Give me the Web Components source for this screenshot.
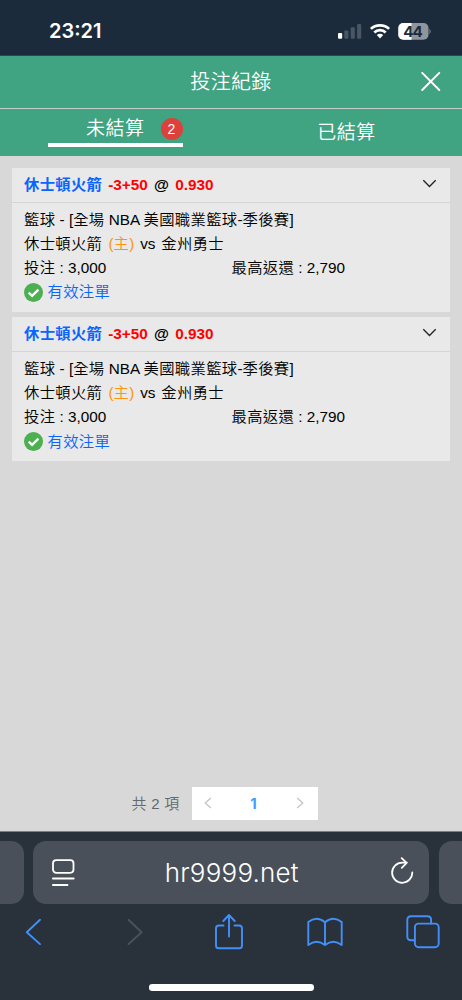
<!DOCTYPE html>
<html lang="zh-Hant">
<head>
<meta charset="utf-8">
<title>投注紀錄</title>
<style>
html,body{margin:0;height:1000px;overflow:hidden;background:#29313a}
body{font-family:"Liberation Sans","Noto Sans CJK TC",sans-serif}
</style>
</head>
<body>
<phone-screen></phone-screen>
<script>
const define = (name, html) => customElements.define(name, class extends HTMLElement {
  constructor() {
    super();
    const t = document.createElement('template');
    t.innerHTML = html;
    this.attachShadow({mode: 'open'}).append(t.content.cloneNode(true));
  }
});

define('status-bar', `
<style>
:host{display:flex;box-sizing:border-box;height:56px;background:#1c2b3b;color:#fff;align-items:center;justify-content:space-between;padding:6px 30px 0 49px;border-bottom:1px solid #254a50}
.time{font:600 20px/24px Inter,sans-serif;letter-spacing:0;width:80px}
svg{display:block}
</style>
<span class="time">23:21</span>
<svg width="94" height="20" viewBox="0 0 94 20">
<g transform="translate(0 .2)"><rect x="0" y="11.8" width="4.2" height="5.8" rx="1" fill="#fff"/><g fill="#4a5663"><rect x="6.3" y="9.2" width="4.1" height="8.4" rx="1"/><rect x="12.7" y="6" width="4.1" height="11.6" rx="1"/><rect x="19.1" y="2.8" width="4.1" height="14.8" rx="1"/></g></g>
<g transform="translate(32 2.8)" fill="none" stroke="#fff" stroke-width="2.7"><path d="M.9 5.1C5.5.4 14.5.4 19.1 5.1"/><path d="M4.3 8.7C7.4 5.6 12.6 5.6 15.7 8.7"/><path d="M6.8 11.3Q10 8.6 13.2 11.3L10 14.6Z" fill="#fff" stroke="none"/></g>
<defs><clipPath id="b"><rect x="60.3" y="2" width="30.2" height="16.8" rx="5"/></clipPath></defs>
<g clip-path="url(#b)"><rect x="60" y="2" width="31" height="17" fill="#8e959d"/><rect x="60" y="2" width="13.5" height="17" fill="#fff"/></g>
<path d="M91.5 7.6q2.1 2.8 0 5.6z" fill="#8e959d"/>
<text x="75" y="15.9" text-anchor="middle" font-family="Inter,sans-serif" font-weight="700" font-size="15.2" textLength="19.5" fill="#1c2b3b">44</text>
</svg>`);

define('page-title', `
<style>
:host{display:grid;box-sizing:border-box;height:53px;grid-template-columns:60px 1fr 60px;align-items:center;background:#40a381;color:#fff;border-bottom:1px solid #c5cdca}
h1{grid-column:2;margin:0;font-weight:350;font-size:20px;line-height:26px;letter-spacing:.35px;text-align:center}
svg{display:block;margin:0 0 3px 19px}
</style>
<h1><slot></slot></h1>
<svg width="20" height="20" viewBox="0 0 20 20" stroke="#fff" stroke-width="1.9" stroke-linecap="round"><path d="M1.2 1.8 18.3 19M18.3 1.8 1.2 19"/></svg>`);

define('tab-bar', `
<style>
:host{display:grid;grid-template-columns:1fr 1fr;height:47px;background:#40a381;color:#fff}
::slotted(*){min-width:0}
</style><slot></slot>`);

define('tab-item', `
<style>
:host{display:flex;justify-content:center;align-items:center;font-size:19px;line-height:26px;letter-spacing:.5px;font-weight:350}
:host([active]){align-items:flex-start;padding-top:7px}
.in{display:flex;align-items:center;padding-top:1px}
:host([active]) .in{box-sizing:border-box;width:135px;height:31px;padding:0 0 1px 38px;border-bottom:4px solid #fff;gap:16px}
::slotted(b){display:block;width:22px;height:22px;border-radius:50%;background:#dd413b;font-size:14px;font-weight:400;line-height:22px;text-align:center;letter-spacing:0;flex:none}
</style><div class="in"><slot></slot><slot name="badge"></slot></div>`);

define('bet-card', `
<style>
:host{display:block;height:143.7px;background:#e9e9e9;color:#000;font-size:15.3px;line-height:24px}
header{display:flex;box-sizing:border-box;height:34.5px;padding:0 13px 0 12px;align-items:center;justify-content:space-between;border-bottom:1.5px solid #d5d5d5;font-weight:700}
.body{padding:5.3px 12px 0}
.row{height:23.9px;white-space:nowrap;font-weight:350}
.c{letter-spacing:.35px}
.bl{color:#0b64fc}.r{color:#f00}.o{color:#ff920d}
header .c{font-weight:700}
.two{display:grid;grid-template-columns:207.5px 1fr}
.ok{display:flex;align-items:center;gap:5px;height:26px;font-weight:350;margin-left:-.5px}
svg{display:block}
header svg{margin-top:-3px}
</style>
<header><span><span class="c bl">休士頓火箭</span><span class="r" style="margin-left:6px">-3+50</span> <span style="margin:0 2px">@</span> <span class="r">0.930</span></span>
<svg width="15" height="9" viewBox="0 0 15 9" fill="none" stroke="#222" stroke-width="1.35"><path d="m1.3 1.3 6.2 6.2 6.2-6.2"/></svg></header>
<div class="body">
<div class="row"><span class="c">籃球</span> - [<span class="c">全場</span> NBA <span class="c">美國職業籃球</span>-<span class="c">季後賽</span>]</div>
<div class="row"><span class="c">休士頓火箭</span> <span class="o" style="margin-left:2px">(<span class="c">主</span>)</span> <span style="margin:0 1.6px">vs</span> <span class="c">金州勇士</span></div>
<div class="row two"><span><span class="c">投注</span> : 3,000</span><span><span class="c">最高返還</span> : 2,790</span></div>
<div class="ok"><svg width="19" height="19" viewBox="0 0 19 19"><circle cx="9.5" cy="9.5" r="9.5" fill="#4caf50"/><path d="m4.7 9.6 3.4 3.3 6.3-6.2" fill="none" stroke="#fff" stroke-width="2.4"/></svg><span class="c bl">有效注單</span></div>
</div>`);

define('page-nav', `
<style>
:host{display:flex;height:34px;align-items:center;justify-content:center;gap:12px;font-size:15px;color:#65676b}
.n{letter-spacing:.3px;font-weight:350;margin-top:-3px}
.pager{display:grid;grid-template-columns:33px 1fr 35px;box-sizing:border-box;width:126px;height:33.5px;background:#fff;align-items:center;justify-items:center;color:#409eff;font:700 15px Inter,sans-serif}
.pager span{margin-top:-1px}
svg{fill:none;stroke:#c3c7ce;stroke-width:1.4;margin-top:-1px}
</style>
<span class="n">共 2 項</span>
<div class="pager"><svg width="8" height="12" viewBox="0 0 8 12"><path d="M6.8 1 1.3 6l5.5 5"/></svg><span>1</span><svg width="8" height="12" viewBox="0 0 8 12"><path d="m1.2 1 5.5 5-5.5 5"/></svg></div>`);

define('address-bar', `
<style>
:host{display:grid;grid-template-columns:23.6px 395.2px 24px;gap:9.9px;height:63px;overflow:hidden}
.box{background:#495059;border-radius:13px}
.l{border-radius:0 13px 13px 0}.r{border-radius:13px 0 0 13px}
.m{display:grid;grid-template-columns:22px 1fr 24px;align-items:center;padding:0 15px 0 18.5px;color:#fff}
.u{font:400 26px/32px Inter,sans-serif;font-weight:350;letter-spacing:.2px;text-align:center;padding-top:1px}
svg{display:block;fill:none;stroke:#fff;stroke-width:1.8;stroke-linecap:round;stroke-linejoin:round}
</style>
<div class="box l"></div>
<div class="box m"><svg width="24" height="28" viewBox="0 0 24 28"><rect x="1" y="1.2" width="20.5" height="12.6" rx="3.2"/><path d="M.9 19.5h20.8M.9 26h14.6"/></svg>
<span class="u">hr9999.net</span>
<svg width="24" height="28" viewBox="0 0 24 28" style="margin-top:-3px"><path d="M22.3 15.5a10.1 10.1 0 1 1-10.1-9.9h4.7M11.7 1.2l5 4.6-4.9 5"/></svg></div>
<div class="box r"></div>`);

define('tool-bar', `
<style>
:host{display:flex;justify-content:space-between;align-items:center;height:40px;padding:0 22.5px 0 24px}
svg{display:block;fill:none;stroke:#438ffa;stroke-width:1.9;stroke-linecap:round;stroke-linejoin:round}
</style>
<svg width="18" height="28" viewBox="0 0 18 28"><path d="M16 1.8 2.8 14.2 16 26.1"/></svg>
<svg width="18" height="28" viewBox="0 0 18 28" style="stroke:#4b525b;margin-left:22px"><path d="m2.5 1.8 13.1 12.4L2.5 26.1"/></svg>
<svg width="30" height="38" viewBox="0 0 30 38" style="margin-left:8px"><path d="M9.5 12.5H4.9Q2 12.5 2 15.4v17Q2 35.3 4.9 35.3h20.2q2.9 0 2.9-2.9v-17q0-2.9-2.9-2.9H20.5M15 23.5V2.5M9.3 8 15 2l5.7 6"/></svg>
<svg width="36" height="30" viewBox="0 0 36 30" style="margin-left:1px"><path d="M18 5.2Q9.5-1.7 1.3 5.1V28q8.4-6.7 16.7 0 8.3-6.7 16.7 0V5.1Q26.5-1.7 18 5.2V28"/></svg>
<svg width="34" height="34" viewBox="0 0 34 34"><path d="M8.5 25.3H5Q1.3 25.3 1.3 21.6V5Q1.3 1.3 5 1.3h16.5q3.6 0 3.6 3.7v3.5"/><rect x="8.9" y="8.6" width="23.8" height="23.6" rx="3.6"/></svg>`);

define('phone-screen', `
<style>
:host{display:flex;flex-direction:column;width:462px;height:1000px;background:#29313a;overflow:hidden}
main{display:flex;flex-direction:column;box-sizing:border-box;height:676px;background:#d8d8d8;padding:12px 12px 10.5px;gap:5.5px;border-bottom:1px solid #7b8081}
page-nav{margin:auto 13px 0 0}
footer{display:flex;flex-direction:column;height:159px;box-sizing:content-box;padding-top:9px}
tool-bar{margin-top:8px}
.home{width:165px;height:6.4px;border-radius:3.2px;background:#fff;margin:32.3px auto 0}
</style>
<status-bar></status-bar>
<page-title>投注紀錄</page-title>
<tab-bar><tab-item active>未結算<b slot="badge">2</b></tab-item><tab-item>已結算</tab-item></tab-bar>
<main><bet-card></bet-card><bet-card></bet-card><page-nav></page-nav></main>
<footer><address-bar></address-bar><tool-bar></tool-bar><div class="home"></div></footer>`);
</script>
</body>
</html>
